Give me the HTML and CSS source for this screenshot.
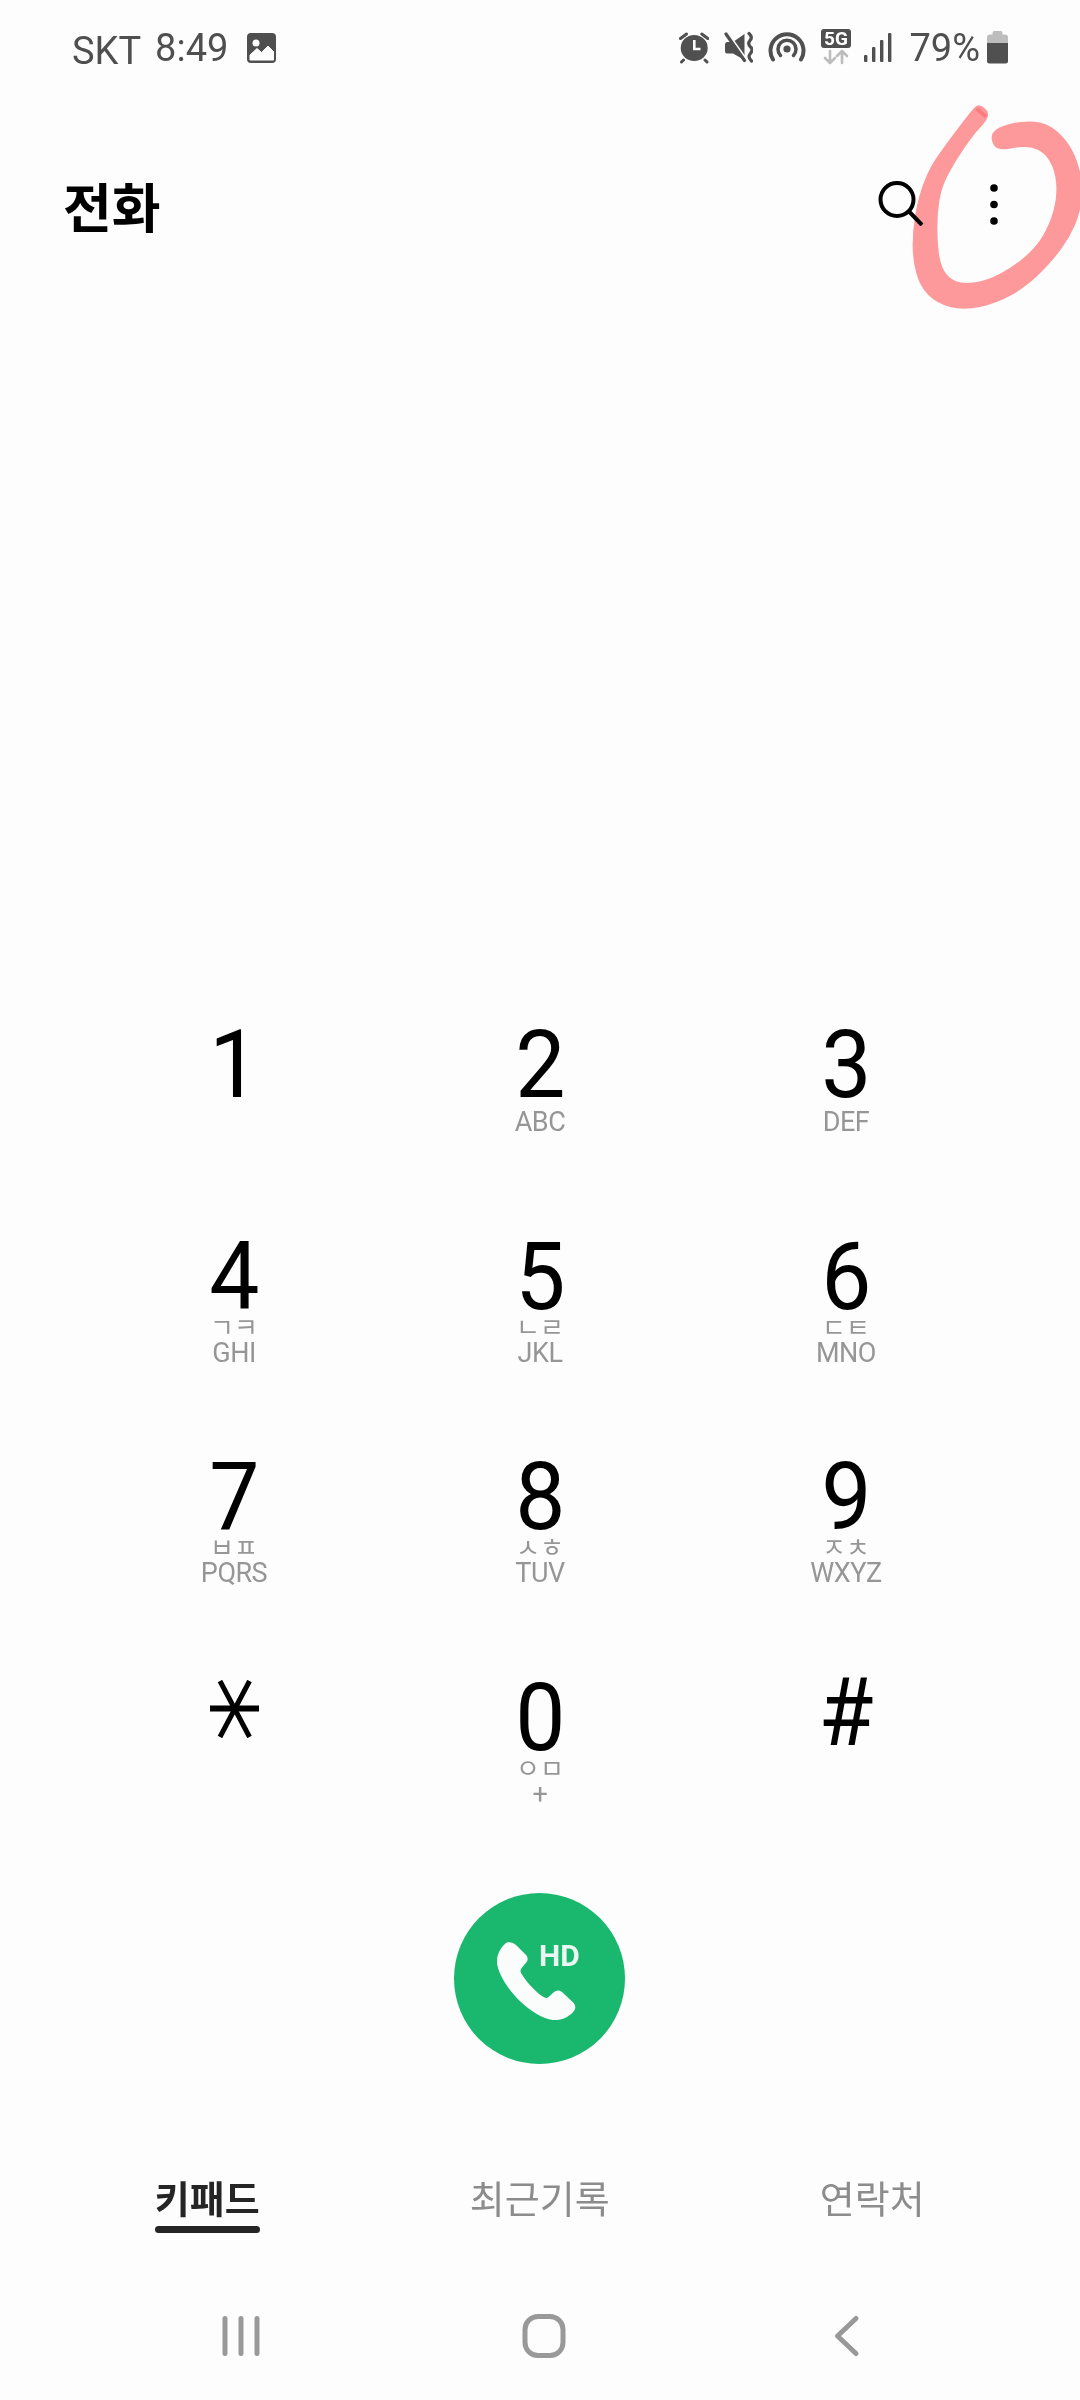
FILE: index.html
```html
<!DOCTYPE html>
<html lang="ko">
<head>
<meta charset="utf-8">
<title>전화</title>
<link rel="stylesheet" href="styles.css">
</head>
<body>
<main class="phone">
  <header class="status">
    <div class="status-left">
      <span class="carrier">SKT</span>
      <span class="clock">8:49</span>
      <svg class="ic-image" width="29" height="30" viewBox="0 0 29 30"><rect width="29" height="30" rx="4" fill="#4f4f4f"/><circle cx="9" cy="10" r="3.5" fill="#fdfdfd"/><path d="M3 27V22L10 15.5L14.5 19.5L21 13L26.5 18.5V27Z" fill="#fdfdfd" stroke="#fdfdfd" stroke-linejoin="round"/></svg>
    </div>
    <div class="status-right">
      <svg width="30" height="38" viewBox="0 0 30 38"><g fill="none" stroke="#505050" stroke-linecap="round"><path d="M1.5 10.5L7.5 6M22.8 6L28.8 10.5" stroke-width="3"/><path d="M4.5 32L2.5 34M26 32L28 34" stroke-width="3"/></g><ellipse cx="15.2" cy="20" rx="13.5" ry="13" fill="#505050"/><path d="M15.3 12V21H21.5" fill="none" stroke="#fdfdfd" stroke-width="2.6"/></svg>
      <svg width="29" height="38" viewBox="0 0 29 38"><path d="M3 14H9L20.5 6V32L9 25.6H3Q1 25.6 1 23V16.5Q1 14 3 14Z" fill="#505050"/><path d="M5 8L22 32" stroke="#fdfdfd" stroke-width="3.5"/><path d="M2 6L20.5 32.5" stroke="#505050" stroke-width="3.2" stroke-linecap="round"/><path d="M25 5.5Q29 9 26 12.5Q23 16 27 19.5Q29.5 22 26 26Q23.5 29 27.5 33" fill="none" stroke="#505050" stroke-width="3.2" stroke-linecap="round"/></svg>
      <svg width="38" height="38" viewBox="0 0 38 38"><g fill="none" stroke="#505050" stroke-linecap="round"><path d="M5 31.5A16.5 16.5 0 1 1 33 31.5" stroke-width="4"/><path d="M12.5 27.5A9 9 0 1 1 25.5 27.5" stroke-width="3.5"/></g><circle cx="19" cy="21" r="3.6" fill="#505050"/></svg>
      <svg class="ic-5g" width="30" height="38" viewBox="0 0 30 38"><rect y="1" width="30" height="19" rx="3" fill="#505050"/><text x="15" y="17" class="ic-5g-text">5G</text><g fill="none" stroke="#bdbdbd" stroke-width="2.6" stroke-linecap="round" stroke-linejoin="round"><path d="M9 23V35M4 30L9 35L14 30"/><path d="M21 35V23M16 28L21 23L26 28"/></g></svg>
      <svg class="ic-signal" width="28" height="38" viewBox="0 0 28 38"><g fill="#505050"><rect x="0" y="27" width="3.4" height="7" rx="1"/><rect x="8" y="19" width="3.4" height="15" rx="1"/><rect x="16" y="12" width="3.4" height="22" rx="1"/><rect x="24" y="5" width="3.4" height="29" rx="1"/></g></svg>
      <span class="battery-text">79%</span>
      <svg class="ic-battery" width="21" height="38" viewBox="0 0 21 38"><path d="M7 3H14Q15.5 3 15.5 6.5H18Q21 6.5 21 9.5V15H0V9.5Q0 6.5 3 6.5H5.5Q5.5 3 7 3Z" fill="#bdbdbd"/><path d="M0 15H21V33Q21 35.500 18.500 35.500H2.500Q0 35.500 0 33Z" fill="#505050"/></svg>
    </div>
  </header>

  <section class="appbar">
    <h1 class="title">전화</h1>
    <svg class="ic-search" width="46" height="46" viewBox="0 0 46 46"><circle cx="19" cy="19.500" r="16.500" fill="none" stroke="#000" stroke-width="4"/><path d="M31 31.500L44 45" fill="none" stroke="#000" stroke-width="4"/></svg>
    <svg class="ic-more" width="10" height="41" viewBox="0 0 10 41"><g fill="#000"><circle cx="5" cy="4" r="3.800"/><circle cx="5" cy="20.500" r="3.800"/><circle cx="5" cy="37" r="3.800"/></g></svg>
  </section>

  <section class="dialpad">
    <div class="key"><span class="digit">1</span></div>
    <div class="key"><span class="digit">2</span><span class="latin">ABC</span></div>
    <div class="key"><span class="digit">3</span><span class="latin">DEF</span></div>
    <div class="key"><span class="digit">4</span><span class="hangul">ㄱㅋ</span><span class="latin">GHI</span></div>
    <div class="key"><span class="digit">5</span><span class="hangul">ㄴㄹ</span><span class="latin">JKL</span></div>
    <div class="key"><span class="digit">6</span><span class="hangul">ㄷㅌ</span><span class="latin">MNO</span></div>
    <div class="key"><span class="digit">7</span><span class="hangul">ㅂㅍ</span><span class="latin">PQRS</span></div>
    <div class="key"><span class="digit">8</span><span class="hangul">ㅅㅎ</span><span class="latin">TUV</span></div>
    <div class="key"><span class="digit">9</span><span class="hangul">ㅈㅊ</span><span class="latin">WXYZ</span></div>
    <div class="key"><svg class="ic-star" role="img" aria-label="*" width="49" height="58" viewBox="0 0 49 58"><g fill="none" stroke="#000"><path d="M0 28.500H49" stroke-width="6"/><path d="M10 1L39.500 57M39.500 1L10 57" stroke-width="5"/></g></svg></div>
    <div class="key"><span class="digit">0</span><span class="hangul">ㅇㅁ</span><span class="latin">+</span></div>
    <div class="key"><span class="digit digit-hash">#</span></div>
  </section>

  <div class="call-row">
    <button class="call" type="button">
      <svg width="79" height="79" viewBox="232 215 238 238"><path d="M268 216C276 216 284 219 290 225L318 253C326 261 326 270 320 277L306 293C302 298 302 304 305 309C320 335 345 362 372 381C378 385 384 384 389 379L402 367C410 360 420 358 428 366L460 396C470 406 470 416 462 425C446 443 424 452 400 450C370 446 335 425 300 392C262 355 236 310 232 280C230 258 240 236 255 222C259 218 263 216 268 216Z" fill="#fbfdfc"/></svg>
      <span class="hd">HD</span>
    </button>
  </div>

  <nav class="tabs">
    <a class="tab tab-active"><span class="tab-label">키패드</span><i class="tab-line"></i></a>
    <a class="tab"><span class="tab-label">최근기록</span></a>
    <a class="tab"><span class="tab-label">연락처</span></a>
  </nav>

  <nav class="sysnav">
    <svg width="60" height="44" viewBox="0 0 60 44"><g stroke="#999" stroke-width="5" stroke-linecap="round"><path d="M14 4.500V39.500M30 4.500V39.500M46 4.500V39.500"/></g></svg>
    <svg width="60" height="44" viewBox="0 0 60 44"><rect x="11" y="2.500" width="38" height="39" rx="13" fill="none" stroke="#999" stroke-width="5"/></svg>
    <svg width="60" height="44" viewBox="0 0 60 44"><path d="M39 4.500L20.500 22L39 39.500" fill="none" stroke="#999" stroke-width="5" stroke-linecap="round" stroke-linejoin="round"/></svg>
  </nav>

  <svg class="scribble" width="240" height="240" viewBox="0 0 720 720"><path d="M412.5 46.500Q420 43 433.500 54Q447 65 443.500 78.500Q440 92 420 113.500Q400 135 372.500 175Q345 215 325 252.500Q305 290 298.500 330Q292 370 292 410Q292 450 296 485Q300 520 312.500 542.500Q325 565 347.500 573.500Q370 582 405 577Q440 572 480 551Q520 530 555 500Q590 470 610 435Q630 400 641 360Q652 320 648.500 280Q645 240 630 215Q615 190 595 180Q575 170 552.500 171Q530 172 507.500 176Q485 180 473.500 175Q462 170 457 155Q452 140 458.500 129Q465 118 487.500 109Q510 100 542.500 96Q575 92 602.500 98.500Q630 105 655 127.500Q680 150 696 180Q712 210 721 250Q730 290 725 330Q720 370 705 405Q690 440 665 475Q640 510 600 550Q560 590 515 615Q470 640 420 651Q370 662 330 651Q290 640 265 615Q240 590 229 550Q218 510 218 465Q218 420 226.500 370Q235 320 252.500 275Q270 230 295 195Q320 160 350 120Q380 80 392.500 65Q405 50 412.500 46.500Z" fill="#ff9a9c"/><path d="M410 56L438 80" stroke="#ff7c80" stroke-width="12" fill="none"/></svg>
</main>
</body>
</html>
```
FILE: styles.css
```css
* { box-sizing: border-box; }
html, body { margin: 0; padding: 0; }
body { background: #fdfdfd; overflow: hidden; }
.phone {
  position: relative;
  width: 1080px;
  height: 2400px;
  overflow: hidden;
  background: #fdfdfd;
  font-family: Roboto, "Noto Sans CJK KR", sans-serif;
  color: #000;
}

/* status bar */
.status {
  display: flex;
  justify-content: space-between;
  height: 96px;
  padding: 28px 72px 0;
  color: #4f4f4f;
  font-size: 38px;
  line-height: 38px;
}
.status-left { display: flex; align-items: flex-start; }
.status-right { display: flex; align-items: flex-start; gap: 15px; }
.carrier { margin: 4px 14px 0 0; }
.clock { margin: 1px 19px 0 0; }
.ic-image { margin-top: 5px; }
.ic-5g-text { font: 700 19px Roboto, sans-serif; fill: #fff; text-anchor: middle; }
.ic-5g { margin-right: -2px; }
.battery-text { margin-left: 1px; margin-right: -8px; line-height: 38px; padding-top: 1px; }
.ic-signal { margin-right: 1px; }

/* app bar */
.appbar {
  display: flex;
  align-items: flex-start;
  height: 70px;
  margin-top: 74px;
  padding: 0 81px 0 63px;
}
.title {
  flex: 1;
  margin: 0;
  font-family: "Noto Sans CJK KR", sans-serif;
  font-size: 53px;
  line-height: 70px;
  font-weight: 700;
}
.ic-search { margin: 10px 65px 0 0; }
.ic-more { margin-top: 14px; }

/* dial pad */
.dialpad {
  display: grid;
  grid-template-columns: repeat(3, 306px);
  grid-template-rows: 212px 220px 221px 220px;
  margin-top: 780px;
  padding-left: 81px;
}
.key { display: flex; flex-direction: column; align-items: center; }
.digit {
  display: block;
  height: 89px;
  font-size: 94px;
  line-height: 90px;
  font-weight: 400;
  transform: scaleX(0.95);
}
.digit-hash { margin-top: -5px; }
.latin {
  display: block;
  font-size: 27px;
  line-height: 26px;
  letter-spacing: -0.5px;
  color: #969696;
}
.hangul {
  display: block;
  height: 24px;
  margin-top: -5px;
  font-family: "Noto Sans CJK KR", sans-serif;
  font-size: 26px;
  line-height: 19px;
  color: #969696;
}
.ic-star { margin-top: 7px; }

/* call button */
.call-row { display: flex; justify-content: center; margin-left: -1px; }
.call {
  position: relative;
  display: flex;
  align-items: center;
  justify-content: center;
  width: 171px;
  height: 171px;
  padding: 6px 6px 0 0;
  border: 0;
  border-radius: 50%;
  background: #19b86e;
}
.hd {
  position: absolute;
  left: 85px;
  top: 48px;
  font: 700 30px/30px Roboto, sans-serif;
  color: #eaf8f1;
}

/* tabs */
.tabs {
  display: grid;
  grid-template-columns: repeat(3, 332.5px);
  height: 58px;
  margin-top: 111px;
  padding-left: 41px;
}
.tab {
  display: flex;
  flex-direction: column;
  align-items: center;
  font-family: "Noto Sans CJK KR", sans-serif;
  font-size: 38px;
  color: #8c8c8c;
}
.tab-label { display: block; line-height: 44px; }
.tab-active { color: #252525; font-weight: 700; }
.tab-line {
  display: block;
  width: 105px;
  height: 7px;
  margin-top: 7px;
  border-radius: 4px;
  background: #252525;
}

/* system nav */
.sysnav {
  display: grid;
  grid-template-columns: repeat(3, 303px);
  justify-items: center;
  margin-top: 81px;
  padding-left: 89px;
}

/* hand-drawn annotation over the toolbar */
.scribble {
  position: absolute;
  left: 840px;
  top: 90px;
  mix-blend-mode: multiply;
  filter: blur(0.5px);
}
```
